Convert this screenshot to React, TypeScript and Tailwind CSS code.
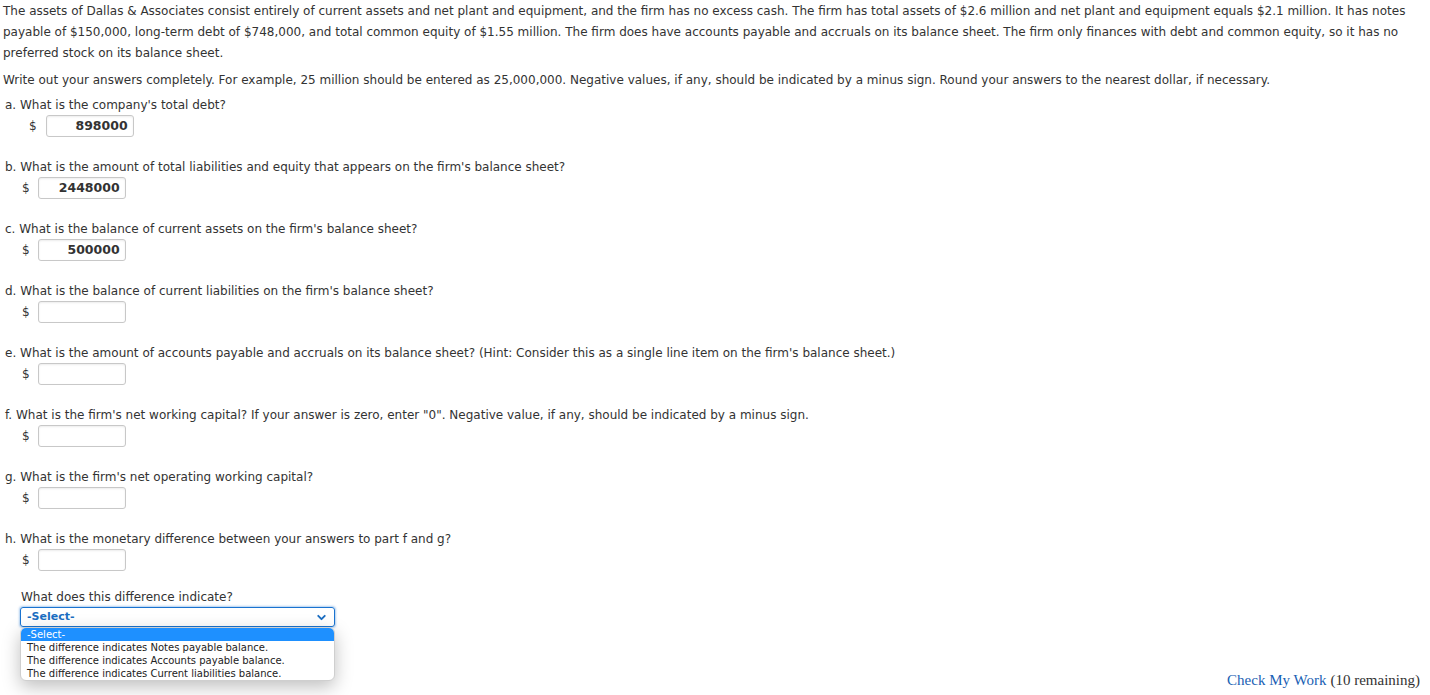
import { ChevronDown } from "lucide-react";

type Question = {
  label: string;
  value?: string;
};

const questions: Question[] = [
  { label: "b. What is the amount of total liabilities and equity that appears on the firm's balance sheet?", value: "2448000" },
  { label: "c. What is the balance of current assets on the firm's balance sheet?", value: "500000" },
  { label: "d. What is the balance of current liabilities on the firm's balance sheet?" },
  { label: "e. What is the amount of accounts payable and accruals on its balance sheet? (Hint: Consider this as a single line item on the firm's balance sheet.)" },
  { label: "f. What is the firm's net working capital? If your answer is zero, enter \"0\". Negative value, if any, should be indicated by a minus sign." },
  { label: "g. What is the firm's net operating working capital?" },
  { label: "h. What is the monetary difference between your answers to part f and g?" },
];

const options = [
  "The difference indicates Notes payable balance.",
  "The difference indicates Accounts payable balance.",
  "The difference indicates Current liabilities balance.",
];

function AnswerBox({ value }: { value?: string }) {
  return (
    <div className="w-[88px] h-[22px] rounded-[3px] border border-[#c8c8c8] shadow-[inset_0_1px_2px_rgba(0,0,0,0.08)] bg-white text-right pr-[5px] font-bold text-[12.5px] leading-[20px] text-[#333]">
      {value}
    </div>
  );
}

export default function App() {
  return (
    <div className="relative w-full h-[695px] overflow-hidden bg-white text-[12px] text-[#333] font-['DejaVu_Sans',Verdana,sans-serif]">
      <div className="pl-[3px] pr-[10px] pt-[1px]">
        <p className="leading-[21px]">
          The assets of Dallas &amp; Associates consist entirely of current assets and net plant and equipment, and the firm has no excess cash. The firm has total assets of $2.6 million and net plant and equipment equals $2.1 million. It has notes payable of $150,000, long-term debt of $748,000, and total common equity of $1.55 million. The firm does have accounts payable and accruals on its balance sheet. The firm only finances with debt and common equity, so it has no preferred stock on its balance sheet.
        </p>
        <p className="leading-[21px] mt-[6px]">
          Write out your answers completely. For example, 25 million should be entered as 25,000,000. Negative values, if any, should be indicated by a minus sign. Round your answers to the nearest dollar, if necessary.
        </p>

        <div className="mt-[4px] pl-[2px]">
          <div className="mb-[20px]">
            <div className="leading-[20px]">a. What is the company's total debt?</div>
            <div className="flex items-center pl-[24px] gap-[9px]">
              <span>$</span>
              <AnswerBox value="898000" />
            </div>
          </div>

          {questions.map((q) => (
            <div key={q.label} className="mb-[20px]">
              <div className="leading-[20px]">{q.label}</div>
              <div className="flex items-center pl-[17px] gap-[8px]">
                <span>$</span>
                <AnswerBox value={q.value} />
              </div>
            </div>
          ))}

          <div className="pl-[16px] -mt-[4px]">
            <div className="leading-[20px]">What does this difference indicate?</div>
            <div className="relative w-[315px] -ml-[1px]">
              <div className="h-[20px] rounded-[3px] border border-[#1a73d0] shadow-[0_0_2px_1px_rgba(26,115,208,0.35)] flex items-center justify-between pl-[6px] pr-[6px]">
                <span className="text-[11px] font-bold text-[#1b6ec2]">-Select-</span>
                <ChevronDown size={13} strokeWidth={3.5} className="text-[#1b6ec2]" />
              </div>
              <div className="absolute left-0 top-[20px] w-[315px] rounded-[6px] bg-white border border-[#cfcfcf] shadow-[0_6px_18px_rgba(0,0,0,0.25)] overflow-hidden z-10 text-[10px] leading-[13px] text-[#222]">
                <div className="bg-[#1e90ff] text-white pl-[6px]">-Select-</div>
                {options.map((o) => (
                  <div key={o} className="pl-[6px]">{o}</div>
                ))}
              </div>
            </div>
          </div>
        </div>

        <div className="flex justify-end mt-[43px] font-['Liberation_Serif',Georgia,serif] text-[15px] leading-[20px]">
          <span className="text-[#1a5fb4]">Check My Work</span>
          <span className="ml-[4px] text-[#333]">(10 remaining)</span>
        </div>
      </div>
    </div>
  );
}
